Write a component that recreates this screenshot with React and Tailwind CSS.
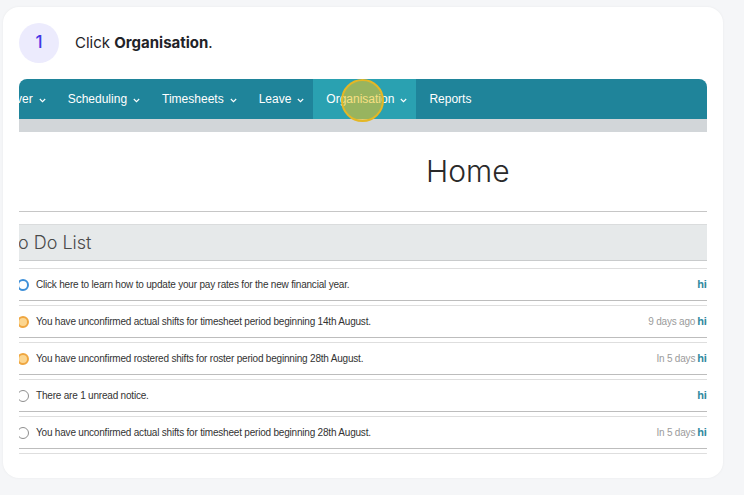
const navItems = [
  { label: 'ver', menu: true, first: true },
  { label: 'Scheduling', menu: true },
  { label: 'Timesheets', menu: true },
  { label: 'Leave', menu: true },
  { label: 'Organisation', menu: true, active: true },
  { label: 'Reports', menu: false },
];

const todos = [
  { text: 'Click here to learn how to update your pay rates for the new financial year.', when: '', tone: 'blue' },
  { text: 'You have unconfirmed actual shifts for timesheet period beginning 14th August.', when: '9 days ago', tone: 'orange' },
  { text: 'You have unconfirmed rostered shifts for roster period beginning 28th August.', when: 'In 5 days', tone: 'orange' },
  { text: 'There are 1 unread notice.', when: '', tone: 'gray' },
  { text: 'You have unconfirmed actual shifts for timesheet period beginning 28th August.', when: 'In 5 days', tone: 'gray' },
  { text: '', when: '', tone: 'none' },
];

const dotStyles = {
  blue: 'border-2 border-[#3d8fd8] bg-white',
  orange: 'border-2 border-[#efa640] bg-[#fcd690]',
  gray: 'border-[1.5px] border-[#8e8e8e] bg-white',
};

const Chevron = () => (
  <svg width="7" height="5" viewBox="0 0 7 5" className="ml-[6px] mt-[2px]">
    <polyline points="0.8,1 3.5,3.7 6.2,1" fill="none" stroke="white" strokeWidth="1.1" />
  </svg>
);

const App = () => {
  return (
    <div className="w-[744px] h-[495px] bg-[#f5f6f8] pl-[3px] pt-[7px]">
      <div className="w-[720px] h-[471px] bg-white rounded-2xl shadow-[0_0_3px_rgba(0,0,0,0.05)] p-4">
        {/* Step header */}
        <div className="flex items-center gap-4 font-['Inter',sans-serif]">
          <div className="w-10 h-10 rounded-full bg-[#ecebfd] flex items-center justify-center text-[17px] font-medium text-[#4536e6]">
            1
          </div>
          <p className="text-[15px] text-[#1f2328]">
            Click <span className="font-bold">Organisation</span>.
          </p>
        </div>

        {/* Screenshot */}
        <div className="relative mt-4 w-[688px] h-[382px] overflow-hidden rounded-lg bg-white font-['Liberation_Sans',Arial,sans-serif]">
          <nav className="flex h-10 bg-[#1f849a] text-white text-[12px]">
            {navItems.map((item) => (
              <div
                key={item.label}
                className={
                  'flex items-center pr-[9px] ' +
                  (item.first ? 'ml-[-3px]' : 'pl-[13px]') +
                  (item.active ? ' bg-[#2aa1b1]' : '')
                }
              >
                <span>{item.label}</span>
                {item.menu && <Chevron />}
              </div>
            ))}
          </nav>
          <div className="h-[13px] bg-[#d2d6d9]" />

          <div className="h-[80px] flex items-center pl-[407px] border-b border-[#c6c6c6]">
            <h1 className="font-['Inter',sans-serif] text-[30px] font-light text-[#2a2a2a]">Home</h1>
          </div>

          <div className="mt-3 h-[37px] flex items-center bg-[#e6e9ea] border-t border-[#dadcdd] border-b border-b-[#c9cbcc]">
            <h2 className="ml-[-11px] font-['Inter',sans-serif] text-[18px] text-[#4a4a4a] font-light">To Do List</h2>
          </div>

          <ul className="mt-[7px]">
            {todos.map((todo, i) => (
              <li
                key={i}
                className="h-[33px] mb-1 flex items-center border-t border-[#dedede] border-b border-b-[#bdbdbd] text-[10px] tracking-[-0.2px] text-[#333]"
              >
                {todo.tone !== 'none' && (
                  <span className={'ml-[-2px] w-[12px] h-[12px] shrink-0 rounded-full ' + dotStyles[todo.tone]} />
                )}
                <span className="ml-[7px]">{todo.text}</span>
                {todo.tone !== 'none' && (
                  <span className="ml-auto flex items-center">
                    <span className="text-[#9b9b9b]">{todo.when}</span>
                    <span className="ml-[2px] mr-[-12px] font-bold text-[11px] text-[#2f8aa0]">hide</span>
                  </span>
                )}
              </li>
            ))}
          </ul>

          {/* click marker */}
          <div className="absolute left-[322px] top-0 w-[43px] h-[43px] rounded-full bg-[#f2c41c]/55 border-2 border-[#e4b725]" />
        </div>
      </div>
    </div>
  );
};

export default App;
